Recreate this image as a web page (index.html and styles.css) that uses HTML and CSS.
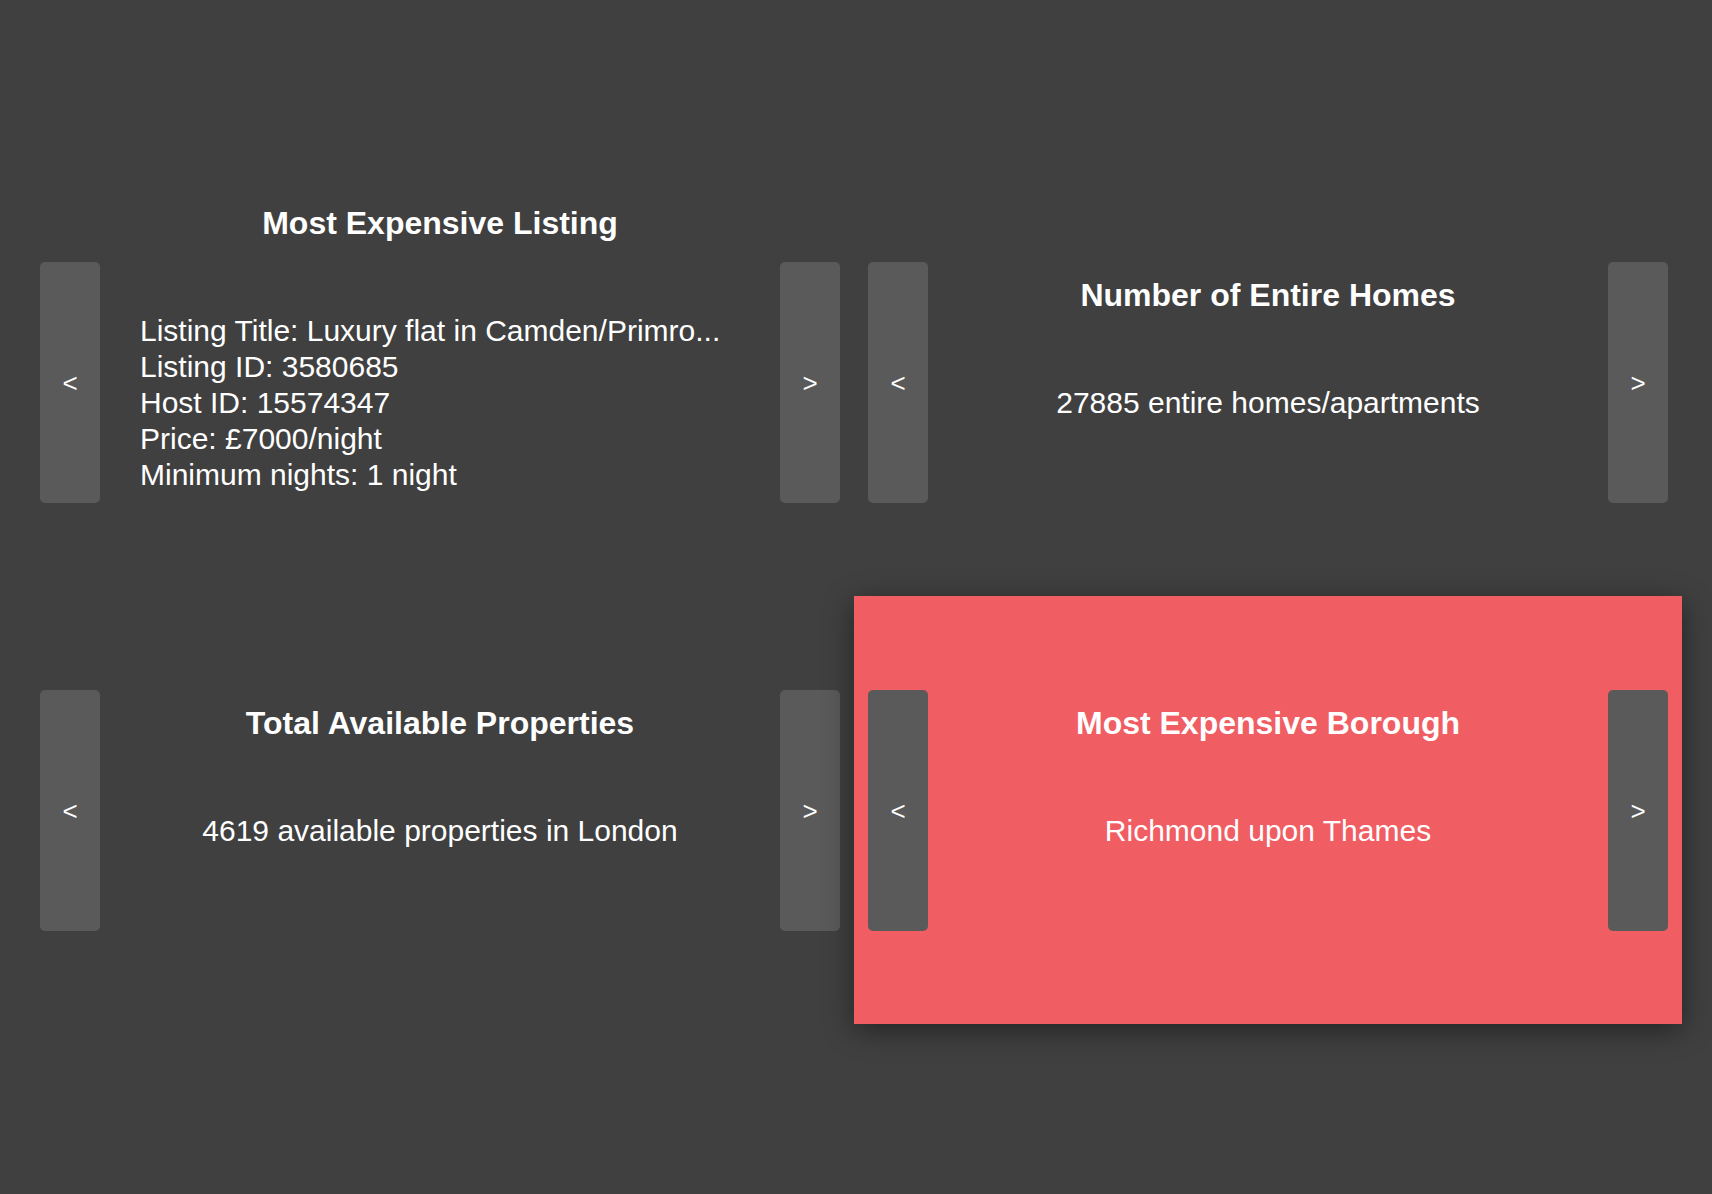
FILE: index.html
```html
<!DOCTYPE html>
<html lang="en">
<head>
<meta charset="utf-8">
<title>London Listings Dashboard</title>
<link rel="stylesheet" href="styles.css">
</head>
<body>
<main class="dashboard">
  <section class="card">
    <button class="nav">&lt;</button>
    <div class="content">
      <h2 class="title">Most Expensive Listing</h2>
      <div class="body body-list">
        <div class="line">Listing Title: Luxury flat in Camden/Primro...</div>
        <div class="line">Listing ID: 3580685</div>
        <div class="line">Host ID: 15574347</div>
        <div class="line">Price: £7000/night</div>
        <div class="line">Minimum nights: 1 night</div>
      </div>
    </div>
    <button class="nav">&gt;</button>
  </section>
  <section class="card">
    <button class="nav">&lt;</button>
    <div class="content">
      <h2 class="title">Number of Entire Homes</h2>
      <div class="body"><div class="line">27885 entire homes/apartments</div></div>
    </div>
    <button class="nav">&gt;</button>
  </section>
  <section class="card">
    <button class="nav">&lt;</button>
    <div class="content">
      <h2 class="title">Total Available Properties</h2>
      <div class="body"><div class="line">4619 available properties in London</div></div>
    </div>
    <button class="nav">&gt;</button>
  </section>
  <section class="card card-active">
    <button class="nav">&lt;</button>
    <div class="content">
      <h2 class="title">Most Expensive Borough</h2>
      <div class="body"><div class="line">Richmond upon Thames</div></div>
    </div>
    <button class="nav">&gt;</button>
  </section>
</main>
</body>
</html>
```
FILE: styles.css
```css
html, body {
  margin: 0;
  padding: 0;
}

body {
  background: #404040;
  min-height: 1194px;
  font-family: "Liberation Sans", Arial, sans-serif;
  color: #ffffff;
}

.dashboard {
  display: grid;
  grid-template-columns: repeat(2, 828px);
  grid-template-rows: repeat(2, 428px);
  padding: 168px 0 0 26px;
}

.card {
  display: flex;
  align-items: center;
  padding: 0 14px;
  box-sizing: border-box;
}

.card-active {
  background: #f05d63;
  box-shadow: 0 6px 28px rgba(0, 0, 0, 0.45);
  position: relative;
  z-index: 1;
}

.nav {
  flex: 0 0 60px;
  width: 60px;
  height: 241px;
  border: none;
  border-radius: 5px;
  background: #5a5a5a;
  color: #ffffff;
  font-family: "Liberation Sans", Arial, sans-serif;
  font-size: 26px;
  padding: 2px 0 0;
  margin: 0;
  line-height: 1;
}

.content {
  flex: 1;
  display: flex;
  flex-direction: column;
  align-items: center;
  padding-bottom: 67px;
}

.title {
  margin: 0 0 71px;
  font-size: 32px;
  line-height: 37px;
  font-weight: bold;
  text-align: center;
}

.body {
  font-size: 30px;
  line-height: 36px;
  text-align: center;
}

.body-list {
  width: 600px;
  text-align: left;
}

.line {
  white-space: nowrap;
}
```
